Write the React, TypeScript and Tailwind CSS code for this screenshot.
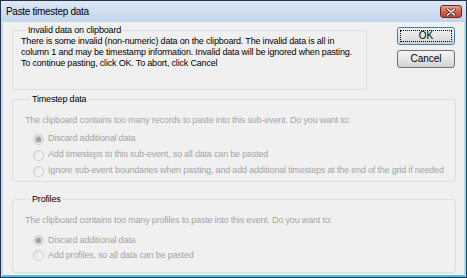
import React from 'react';

const GroupBox = ({ title, className, children }: { title: string; className: string; children: React.ReactNode }) => (
  <fieldset className={`border border-[#d5dfe5] rounded-[3px] ${className}`}>
    <legend className="ml-[5px] px-[2px] leading-[12px] text-black">{title}</legend>
    {children}
  </fieldset>
);

const Radio = ({ checked, label, h }: { checked?: boolean; label: string; h: string }) => (
  <div className={`flex items-center gap-[4px] ${h}`}>
    <span className="w-[11px] h-[11px] rounded-full border border-[#cbcbcb] bg-gradient-to-br from-[#e4e4e4] to-[#fafafa] flex items-center justify-center">
      {checked && <span className="w-[5px] h-[5px] rounded-full bg-[#a2a2a2] ring-1 ring-[#c8c8c8]" />}
    </span>
    <span>{label}</span>
  </div>
);

const Button = ({ label, isDefault }: { label: string; isDefault?: boolean }) => (
  <button
    className={`w-[58px] h-[18px] rounded-[3px] border ${
      isDefault ? 'border-[#3c7fb1] p-[2px]' : 'border-[#707070]'
    } bg-gradient-to-b from-[#f2f2f2] via-[#e6e6e6] to-[#d0d0d0] flex items-center justify-center text-black`}
  >
    {isDefault ? (
      <span className="w-full h-full border border-dotted border-black flex items-center justify-center leading-none">{label}</span>
    ) : (
      <span className="leading-none">{label}</span>
    )}
  </button>
);

export default function App() {
  return (
    <div className="w-[467px] h-[278px] border border-[#23344a] flex flex-col bg-[#c9dbef] font-['Liberation_Sans',Arial,sans-serif] text-[9px] tracking-[-0.18px]">
      {/* title bar */}
      <div className="h-[21px] flex items-center justify-between pl-[5px] pr-[4px] bg-gradient-to-b from-[#dce8f5] to-[#c2d5ec]">
        <span className="text-[10px] tracking-[-0.3px] text-black">Paste timestep data</span>
        <div className="w-[22px] h-[13px] rounded-[3px] border border-[#6e2a22] bg-gradient-to-b from-[#e6a595] via-[#cf6450] to-[#c0472f] flex items-center justify-center">
          <svg width="10" height="8" viewBox="0 0 10 8">
            <path d="M1.5 1 L8.5 7 M8.5 1 L1.5 7" stroke="#5a2a22" strokeWidth="3" strokeLinecap="round" />
            <path d="M1.5 1 L8.5 7 M8.5 1 L1.5 7" stroke="#ffffff" strokeWidth="1.6" strokeLinecap="round" />
          </svg>
        </div>
      </div>

      {/* client area */}
      <div className="flex-1 bg-[#f0f0f0] border-l-2 border-r-2 border-b-2 border-l-[#c9dbef] border-r-[#a6dff2] border-b-[#47bfe7] pl-[9px] pr-[8px] pt-[2px]">
        <div className="flex items-start justify-between">
          <GroupBox title="Invalid data on clipboard" className="w-[355px] px-[8px] pb-[20px]">
            <p className="leading-[11px] text-black">
              There is some invalid (non-numeric) data on the clipboard. The invalid data is all in
              <br />
              column 1 and may be timestamp information. Invalid data will be ignored when pasting.
              <br />
              To continue pasting, click OK. To abort, click Cancel
            </p>
          </GroupBox>
          <div className="mt-[3px] mr-[1px] flex flex-col gap-[5px] text-[10px] tracking-normal">
            <Button label="OK" isDefault />
            <Button label="Cancel" />
          </div>
        </div>

        <GroupBox title="Timestep data" className="mt-[3px] pl-[12px] pt-[10px] pb-[2px]">
          <p className="leading-[11px] text-[#a5a5a8]">
            The clipboard contains too many records to paste into this sub-event. Do you want to:
          </p>
          <div className="mt-[5px] pl-[8px] text-[#a5a5a8]">
            <Radio checked label="Discard additional data" h="h-[16px]" />
            <Radio label="Add timesteps to this sub-event, so all data can be pasted" h="h-[16px]" />
            <Radio
              label="Ignore sub-event boundaries when pasting, and add additional timesteps at the end of the grid if needed"
              h="h-[16px]"
            />
          </div>
        </GroupBox>

        <GroupBox title="Profiles" className="mt-[11px] pl-[12px] pt-[10px] pb-[9px]">
          <p className="leading-[11px] text-[#a5a5a8]">
            The clipboard contains too many profiles to paste into this event. Do you want to:
          </p>
          <div className="mt-[7px] pl-[8px] text-[#a5a5a8]">
            <Radio checked label="Discard additional data" h="h-[15px]" />
            <Radio label="Add profiles, so all data can be pasted" h="h-[15px]" />
          </div>
        </GroupBox>
      </div>
    </div>
  );
}
